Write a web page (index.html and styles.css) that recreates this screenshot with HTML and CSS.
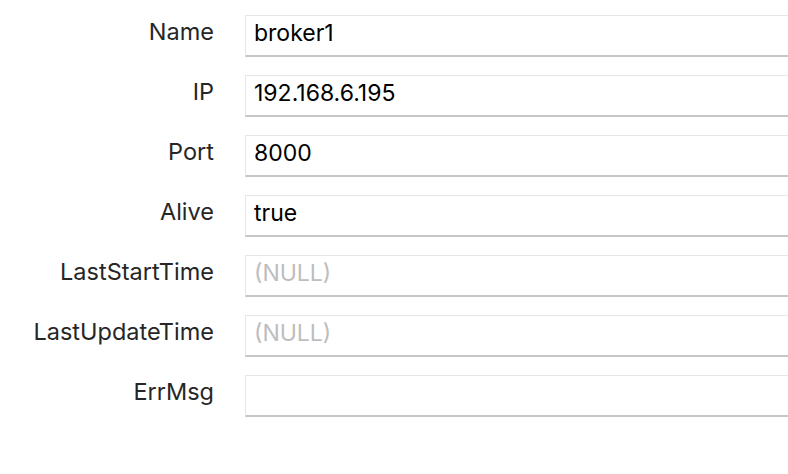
FILE: index.html
```html
<!DOCTYPE html>
<html>
<head>
<meta charset="utf-8">
<link rel="stylesheet" href="styles.css">
</head>
<body>
<div class="form">
  <div class="label">Name</div><div class="field">broker1</div>
  <div class="label">IP</div><div class="field">192.168.6.195</div>
  <div class="label">Port</div><div class="field">8000</div>
  <div class="label">Alive</div><div class="field">true</div>
  <div class="label">LastStartTime</div><div class="field null">(NULL)</div>
  <div class="label">LastUpdateTime</div><div class="field null">(NULL)</div>
  <div class="label">ErrMsg</div><div class="field"></div>
</div>
</body>
</html>
```
FILE: styles.css
```css
html, body {
  margin: 0;
  background: #ffffff;
}
body {
  padding-top: 15px;
  font-family: Inter, "Noto Sans", sans-serif;
  overflow: hidden;
}
.form {
  display: grid;
  grid-template-columns: 214px 1fr;
  column-gap: 31px;
  row-gap: 18px;
  grid-auto-rows: 42px;
}
.label {
  text-align: right;
  font-size: 23.5px;
  color: #262626;
  line-height: 42px;
  margin-top: -4px;
  white-space: nowrap;
}
.field {
  box-sizing: border-box;
  height: 42px;
  border: 1px solid #e6e6e6;
  border-bottom: 2px solid #c6c6c6;
  border-right: none;
  padding-left: 8px;
  font-size: 23px;
  line-height: 35px;
  color: #000;
}
.null {
  color: #bdbdbd;
}
```
